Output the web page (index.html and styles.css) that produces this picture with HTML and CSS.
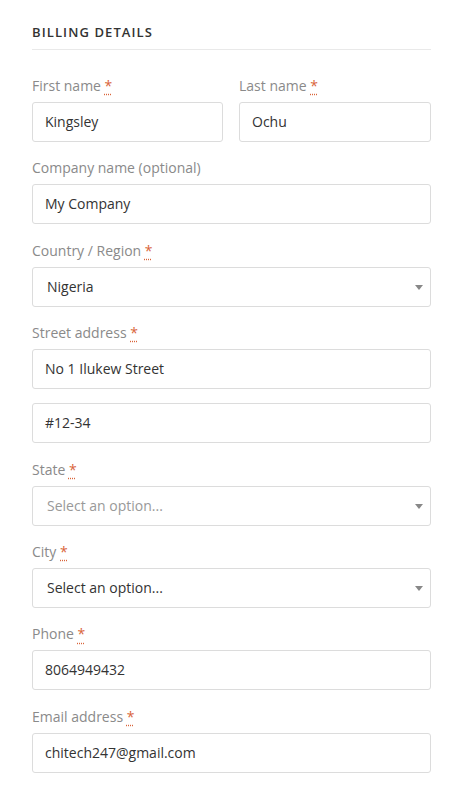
FILE: index.html
```html
<!DOCTYPE html>
<html lang="en">
<head>
<meta charset="utf-8">
<title>Billing details</title>
<link rel="stylesheet" href="styles.css">
</head>
<body>
<div class="billing">
  <h3 class="title">Billing details</h3>
  <div class="row two">
    <div class="field">
      <label class="lbl">First name <abbr class="req" title="required">*</abbr></label>
      <div class="input">Kingsley</div>
    </div>
    <div class="field">
      <label class="lbl">Last name <abbr class="req" title="required">*</abbr></label>
      <div class="input">Ochu</div>
    </div>
  </div>
  <div class="field">
    <label class="lbl">Company name (optional)</label>
    <div class="input">My Company</div>
  </div>
  <div class="field">
    <label class="lbl">Country / Region <abbr class="req" title="required">*</abbr></label>
    <div class="input select">Nigeria<span class="arrow"></span></div>
  </div>
  <div class="field">
    <label class="lbl">Street address <abbr class="req" title="required">*</abbr></label>
    <div class="input">No 1 Ilukew Street</div>
    <div class="input extra">#12-34</div>
  </div>
  <div class="field">
    <label class="lbl">State <abbr class="req" title="required">*</abbr></label>
    <div class="input select placeholder">Select an option...<span class="arrow"></span></div>
  </div>
  <div class="field">
    <label class="lbl">City <abbr class="req" title="required">*</abbr></label>
    <div class="input select">Select an option...<span class="arrow"></span></div>
  </div>
  <div class="field">
    <label class="lbl">Phone <abbr class="req" title="required">*</abbr></label>
    <div class="input">8064949432</div>
  </div>
  <div class="field">
    <label class="lbl">Email address <abbr class="req" title="required">*</abbr></label>
    <div class="input">chitech247@gmail.com</div>
  </div>
</div>
</body>
</html>
```
FILE: styles.css
```css
* { box-sizing: border-box; }
html, body { margin: 0; padding: 0; background: #fff; }
body {
  font-family: "Open Sans", "Liberation Sans", sans-serif;
  font-size: 14px;
  color: #333;
}
.billing {
  width: 399px;
  margin-left: 32px;
  padding-top: 22px;
}
.title {
  margin: 0 0 26px 0;
  font-size: 13px;
  font-weight: 600;
  letter-spacing: 1.1px;
  text-transform: uppercase;
  line-height: 20px;
  padding-bottom: 7px;
  border-bottom: 1px solid #e9e9e9;
  color: #333;
}
.row.two {
  display: grid;
  grid-template-columns: 191px 192px;
  column-gap: 16px;
}
.field {
  display: flex;
  flex-direction: column;
  margin-bottom: 16.4px;
}
.lbl {
  display: block;
  line-height: 20px;
  margin-bottom: 6px;
  color: #8a8a8a;
}
.req {
  color: #d9643a;
  text-decoration: underline dotted;
  text-underline-offset: 3px;
  border: none;
}
.input {
  position: relative;
  height: 40px;
  border: 1px solid #dcdcdc;
  border-radius: 3px;
  padding: 0 12px;
  line-height: 38px;
  color: #333;
  background: #fff;
}
.input.extra { margin-top: 14px; }
.select { padding-left: 14px; }
.placeholder { color: #999; }
.arrow {
  position: absolute;
  right: 7px;
  top: 17px;
  width: 0;
  height: 0;
  border-left: 4px solid transparent;
  border-right: 4px solid transparent;
  border-top: 5px solid #888;
}
```
